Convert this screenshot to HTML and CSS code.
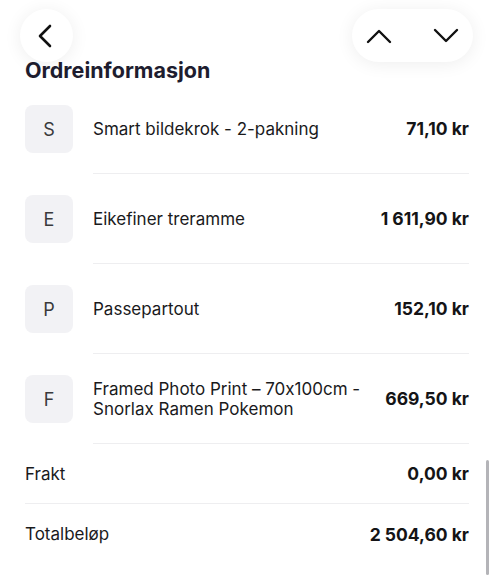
FILE: index.html
```html
<!DOCTYPE html>
<html lang="nb">
<head>
    <meta charset="UTF-8">
    <meta name="viewport" content="width=device-width, initial-scale=1.0">
    <title>Ordreinformasjon</title>
    <link rel="stylesheet" href="styles.css">
</head>
<body>
    <div class="topbar">
        <button class="round-btn" aria-label="Tilbake">
            <svg width="16" height="24" viewBox="0 0 16 24"><path d="M13 2 L3 12 L13 22" fill="none" stroke="#111" stroke-width="2.6" stroke-linecap="round" stroke-linejoin="round"/></svg>
        </button>
        <div class="pill">
            <button class="pill-btn" aria-label="Forrige">
                <svg width="26" height="16" viewBox="0 0 26 16"><path d="M2 14 L13 3 L24 14" fill="none" stroke="#111" stroke-width="2.4" stroke-linecap="round" stroke-linejoin="round"/></svg>
            </button>
            <button class="pill-btn" aria-label="Neste">
                <svg width="26" height="16" viewBox="0 0 26 16"><path d="M2 2 L13 13 L24 2" fill="none" stroke="#111" stroke-width="2.4" stroke-linecap="round" stroke-linejoin="round"/></svg>
            </button>
        </div>
    </div>

    <main class="order">
        <h2 class="title">Ordreinformasjon</h2>
        <ul class="items">
            <li class="item">
                <div class="badge">S</div>
                <div class="info">
                    <span class="name">Smart bildekrok - 2-pakning</span>
                    <span class="price">71,10 kr</span>
                </div>
            </li>
            <li class="item">
                <div class="badge">E</div>
                <div class="info">
                    <span class="name">Eikefiner treramme</span>
                    <span class="price">1 611,90 kr</span>
                </div>
            </li>
            <li class="item">
                <div class="badge">P</div>
                <div class="info">
                    <span class="name">Passepartout</span>
                    <span class="price">152,10 kr</span>
                </div>
            </li>
            <li class="item">
                <div class="badge">F</div>
                <div class="info">
                    <span class="name">Framed Photo Print – 70x100cm - Snorlax Ramen Pokemon</span>
                    <span class="price">669,50 kr</span>
                </div>
            </li>
        </ul>
        <div class="summary-row">
            <span>Frakt</span>
            <span class="price">0,00 kr</span>
        </div>
        <div class="summary-row last">
            <span>Totalbeløp</span>
            <span class="price">2 504,60 kr</span>
        </div>
    </main>

    <div class="scrollbar"></div>
</body>
</html>
```

FILE: styles.css
```css
body {
    margin: 0;
    font-family: Inter, "Noto Sans", sans-serif;
    font-feature-settings: "calt" 0;
    background-color: #fff;
    color: #1a1a1c;
}
.topbar {
    position: absolute;
    top: 9px;
    left: 20px;
    right: 21px;
    display: flex;
    justify-content: space-between;
    align-items: center;
}
.round-btn {
    width: 53px;
    height: 53px;
    border-radius: 50%;
    border: none;
    background: #fff;
    box-shadow: 0 2px 18px rgba(0, 0, 0, 0.07);
    display: flex;
    align-items: center;
    justify-content: center;
    padding: 0 4px 0 0;
}
.pill {
    height: 53px;
    width: 121px;
    border-radius: 27px;
    background: #fff;
    box-shadow: 0 2px 18px rgba(0, 0, 0, 0.07);
    display: flex;
    align-items: center;
    justify-content: space-between;
    padding: 0 14px 0 14px;
    box-sizing: border-box;
}
.pill-btn {
    border: none;
    background: none;
    padding: 0;
    display: flex;
}
.order {
    padding: 0 25px;
}
.title {
    margin: 58px 0 2px;
    font-size: 21.5px;
    line-height: 24px;
    font-weight: 700;
    color: #1e1d2f;
}
.items {
    list-style: none;
    margin: 0;
    padding: 0;
}
.item {
    display: flex;
    align-items: stretch;
}
.badge {
    width: 48px;
    height: 48px;
    margin: 21px 0 21px;
    border-radius: 8px;
    background: #f2f2f5;
    color: #3a3a3c;
    font-size: 18px;
    display: flex;
    align-items: center;
    justify-content: center;
    flex-shrink: 0;
}
.info {
    flex: 1;
    margin-left: 20px;
    display: flex;
    align-items: center;
    justify-content: space-between;
    gap: 24px;
    border-bottom: 1px solid #eeeef0;
}
.name {
    font-size: 17px;
    line-height: 20px;
}
.price {
    font-size: 17.5px;
    font-weight: 700;
    white-space: nowrap;
    color: #141416;
}
.summary-row {
    height: 59px;
    display: flex;
    align-items: center;
    justify-content: space-between;
    font-size: 17px;
    border-bottom: 1px solid #eeeef0;
}
.summary-row.last {
    border-bottom: none;
    height: 60px;
}
.scrollbar {
    position: absolute;
    right: 5px;
    top: 460px;
    width: 3px;
    height: 115px;
    border-radius: 2px;
    background: #b4b4b8;
}
```
